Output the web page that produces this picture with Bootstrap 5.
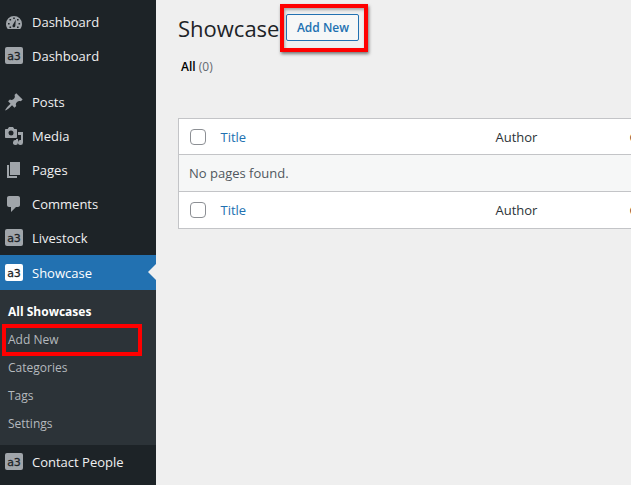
<!DOCTYPE html>
<html lang="en">
<head>
<meta charset="utf-8">
<meta name="viewport" content="width=device-width, initial-scale=1">
<title>Showcase</title>
<link href="https://cdn.jsdelivr.net/npm/bootstrap@5.3.0/dist/css/bootstrap.min.css" rel="stylesheet">
<style>
body{font-family:"Open Sans","Noto Sans",sans-serif;font-size:13px;line-height:20px;background:#efefef;color:#3c434a}
a{text-decoration:none}
.side{width:156px;background:#1d2327;padding-top:5px}
.side .nav-link{height:34px;padding:0 0 0 4px;gap:8px;color:#f0f0f1;font-size:13px}
.side .nav-link svg{width:20px;height:20px;flex:none;fill:#a0a5aa}
.side .split{margin-top:12px}
.side .nav-link.current{height:35px;background:#2271b1;color:#fff;position:relative}
.side .nav-link.current svg{fill:#fff}
.side .nav-link.current::after{content:"";position:absolute;right:0;top:9px;border:8px solid transparent;border-right-color:#efefef;border-left-width:0}
.glyph{font:11px "DejaVu Sans",sans-serif;fill:#1d2327;stroke:#1d2327;stroke-width:.3px}
.current .glyph{fill:#2271b1;stroke:#2271b1}
.sub{background:#2c3338;padding:8px 0 7px;font-size:12px}
.sub a{height:28px;padding-left:8px;color:#b4b9be}
.sub a.chosen{color:#fff;font-weight:700}
.sub a.marked{position:relative}
.sub a.marked::after{content:"";position:absolute;inset:-2px 14px -2px 2px;border:4px solid #f00}
.main{padding:4px 0 0 22px;min-width:0}
.main h1{font-size:22px;line-height:32px;font-weight:400;color:#1d2327}
.headline{gap:1px}
.callout{border:4px solid #f00;padding:6px 5px 7px 2px;box-shadow:1px 2px 3px rgba(0,0,0,.5),inset 1px 2px 3px rgba(0,0,0,.3)}
.btn-add{font-size:12px;font-weight:600;line-height:20px;height:27px;width:73px;padding:0;border:1px solid #2271b1;border-radius:2px;background:#f6f7f7;color:#2271b1}
.filter{margin:5px 0 41px 3px;font-size:12px}
.filter a{color:#000;font-weight:600}
.filter span{color:#646970}
.list{width:calc(100% + 93px);table-layout:fixed;border:1px solid #c3c4c7;background:#fff;font-size:13px}
.list th,.list td{height:37px;padding:0 0 0 10px;font-weight:400;vertical-align:middle;border-top:1px solid #c3c4c7;color:#2c3338}
.list thead th{height:36px}
.list td{background:#f6f7f7;color:#50575e}
.list th a{color:#2271b1}
.list .c-check{width:32px}.c-author{width:134px}.c-cat{width:104px}
.list .form-check-input{display:block;width:16px;height:16px;margin:0 0 0 1px;border:1px solid #8c8f94;border-radius:4px}
</style>
</head>
<body>
<svg class="d-none" aria-hidden="true">
<symbol id="a3" viewBox="0 0 20 20"><rect x="1" y="1" width="18" height="17" rx="2"/><text class="glyph" x="10" y="14" text-anchor="middle">a3</text></symbol>
</svg>
<div class="d-flex min-vh-100">
<nav class="side flex-shrink-0" aria-label="Admin menu">
<div class="nav flex-column flex-nowrap">
<a class="nav-link d-flex align-items-center" href="#"><svg viewBox="0 0 20 20"><path fill-rule="evenodd" d="M3.800 17h12.400c1.100-1.400 1.800-3 1.800-5a8 8 0 0 0-16 0c0 2 .7 3.600 1.800 5zM9.200 5.500h1.600v1.600H9.200zM5.500 7h1.600v1.600H5.500zm7.500 0h1.600v1.600H13zM4 11h1.600v1.600H4zm10.500 0h1.600v1.600h-1.600zM5.500 14.500h1.600v1.600H5.500zm7.500 0h1.600v1.600H13zM11.800 7.500l-.5 6.500c-.2 2-3 1.700-2.800-.2.200-1.300 1.700-3 3.300-6.300z"/></svg>Dashboard</a>
<a class="nav-link d-flex align-items-center" href="#"><svg><use href="#a3"/></svg>Dashboard</a>
<a class="nav-link d-flex align-items-center split" href="#"><svg viewBox="0 0 20 20"><path d="M10.440 3.020l1.820-1.820 6.360 6.350-1.830 1.820c-1.050-.680-2.480-.570-3.410.360l-.750.750c-.92.930-1.040 2.350-.350 3.410l-1.830 1.820-2.410-2.410-2.800 2.790c-.420.420-3.380 2.710-3.800 2.290s1.860-3.390 2.280-3.810l2.790-2.790L4.100 9.360l1.830-1.820c1.050.690 2.480.570 3.400-.360l.750-.750c.930-.920 1.050-2.350.360-3.410z"/></svg>Posts</a>
<a class="nav-link d-flex align-items-center" href="#"><svg viewBox="0 0 20 20"><path fill-rule="evenodd" d="M13 11V4c0-.550-.450-1-1-1h-1.670L9 1H5L3.670 3H2c-.550 0-1 .450-1 1v7c0 .550.450 1 1 1h10c.550 0 1-.450 1-1zM7 4.500a2.500 2.500 0 1 1 0 5 2.500 2.500 0 0 1 0-5zM14 6h5v10.500a2.500 2.500 0 1 1-2-2.450V9h-3v7.500A2.500 2.500 0 1 1 12 14.050V13h1.500c.3 0 .5-.2.5-.5z"/></svg>Media</a>
<a class="nav-link d-flex align-items-center" href="#"><svg viewBox="0 0 20 20"><path d="M6 15V2h10v13zm-1 1h8v2H3V5h2z"/></svg>Pages</a>
<a class="nav-link d-flex align-items-center" href="#"><svg viewBox="0 0 20 20"><path d="M5 2h9c1.100 0 2 .900 2 2v7c0 1.100-.900 2-2 2h-2l-5 5v-5H5c-1.100 0-2-.900-2-2V4c0-1.100.900-2 2-2z"/></svg>Comments</a>
<a class="nav-link d-flex align-items-center" href="#"><svg><use href="#a3"/></svg>Livestock</a>
<a class="nav-link d-flex align-items-center current" href="#" aria-current="page"><svg><use href="#a3"/></svg>Showcase</a>
<div class="sub d-flex flex-column">
<a class="d-flex align-items-center chosen" href="#">All Showcases</a>
<a class="d-flex align-items-center marked" href="#">Add New</a>
<a class="d-flex align-items-center" href="#">Categories</a>
<a class="d-flex align-items-center" href="#">Tags</a>
<a class="d-flex align-items-center" href="#">Settings</a>
</div>
<a class="nav-link d-flex align-items-center" href="#"><svg><use href="#a3"/></svg>Contact People</a>
</div>
</nav>
<main class="main flex-grow-1 overflow-hidden">
<div class="headline d-flex align-items-center">
<h1 class="mb-0">Showcase</h1>
<div class="callout d-flex"><button type="button" class="btn btn-add">Add New</button></div>
</div>
<div class="filter"><a href="#">All</a> <span>(0)</span></div>
<table class="list">
<colgroup><col class="c-check"><col><col class="c-author"><col class="c-cat"></colgroup>
<thead><tr><th><input class="form-check-input" type="checkbox" aria-label="Select all"></th><th scope="col"><a href="#">Title</a></th><th scope="col">Author</th><th scope="col">Categories</th></tr></thead>
<tbody><tr><td colspan="4">No pages found.</td></tr></tbody>
<tfoot><tr><th><input class="form-check-input" type="checkbox" aria-label="Select all rows"></th><th scope="col"><a href="#">Title</a></th><th scope="col">Author</th><th scope="col">Categories</th></tr></tfoot>
</table>
</main>
</div>
<script src="https://cdn.jsdelivr.net/npm/bootstrap@5.3.0/dist/js/bootstrap.bundle.min.js"></script>
</body>
</html>
